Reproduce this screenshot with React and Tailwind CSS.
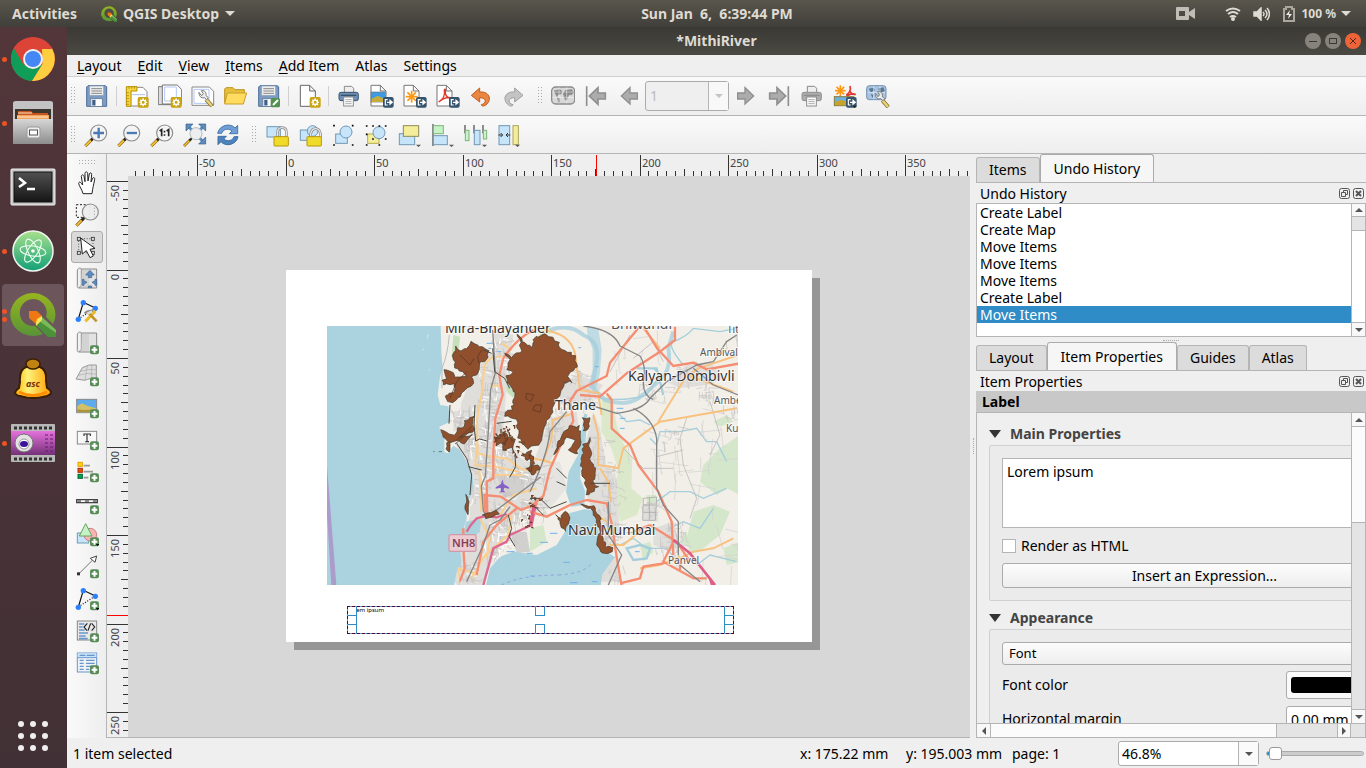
import React, { useEffect, useRef, useState } from "react";

/* ---------- shared icon parts, all drawn on a 72 unit grid ---------- */

function Ico({ children, className = "h-6 w-6" }) {
  return (
    <svg viewBox="0 0 72 72" className={className + " shrink-0"} fill="none" aria-hidden="true">
      {children}
    </svg>
  );
}

const PlusBadge = () => (
  <g>
    <rect x="45" y="43" width="27" height="27" rx="6" fill="#5a8c5a" />
    <path d="M58.500 48v17M50 56.500h17" stroke="#fff" strokeWidth="6" />
  </g>
);
const GearBadge = () => (
  <g>
    <rect x="38" y="39" width="33" height="32" rx="5" fill="#c8a416" />
    <path d="M54.500 43v24M43 55h23M46 47l17 16M63 47L46 63" stroke="#fff" strokeWidth="4" />
    <circle cx="54.500" cy="55" r="6.500" fill="#c8a416" stroke="#fff" strokeWidth="4" />
  </g>
);
const ExportBadge = () => (
  <g>
    <rect x="39" y="39" width="32" height="32" rx="6" fill="#35536d" />
    <path d="M53 47h-7v16h7M51 55h14M60 49v12l7-6z" stroke="#fff" strokeWidth="3.500" />
  </g>
);
const Floppy = () => (
  <g>
    <path d="M9 5h52l4 4v58H5V9z" fill="#7c9cc4" stroke="#4f6f96" strokeWidth="3" />
    <rect x="14" y="6" width="42" height="28" fill="#eee" stroke="#8fa3b8" strokeWidth="2" />
    <path d="M19 14h32M19 21h32M19 28h32" stroke="#888" strokeWidth="3" />
    <rect x="16" y="44" width="36" height="23" fill="#d7dce2" stroke="#5d7896" strokeWidth="2" />
    <rect x="22" y="48" width="9" height="16" fill="#3e5f8a" />
    <rect x="33" y="46" width="17" height="20" fill="#fff" />
  </g>
);
const Sheet = () => <path d="M3 4h28l17 17v45H3zM31 4v17h17" fill="#fff" stroke="#777" strokeWidth="3" />;
const Lens = () => (
  <g>
    <path d="M4 69l22-22" stroke="#6b5312" strokeWidth="9" />
    <path d="M4 69l18-18" stroke="#f3bd31" strokeWidth="6" />
    <path d="M21 52l7-7" stroke="#222" strokeWidth="7" />
    <circle cx="44" cy="30" r="24" fill="#f4f4f4" stroke="#8b8b8b" strokeWidth="3.500" />
  </g>
);
const Wrench = () => (
  <g>
    <path d="M45 46l18 20" stroke="#8a7430" strokeWidth="12" />
    <path d="M45 46l17 19" stroke="#ecd47e" strokeWidth="7" />
    <path d="M24 25c-1 10 6 19 16 16l7 6 5-6-7-6c2-11-6-17-14-15l6 9-5 6z" fill="#eee" stroke="#777" strokeWidth="3" />
  </g>
);
const Drop = () => <path d="M54 65h15l-7.500 7z" fill="#555" />;
const Dots = () => <path d="M6 8h0M62 8h0M6 66h0M62 66h0" stroke="#000" strokeWidth="5" strokeLinecap="square" />;
const Printer = ({ body = "#6f8fb5", line = "#35536d" }) => (
  <g>
    <path d="M22 26V7h22l6 6v13" fill="#eee" stroke="#8a8a8a" strokeWidth="3" />
    <rect x="6" y="25" width="58" height="25" rx="6" fill={body} stroke={line} strokeWidth="3" />
    <path d="M11 34h47" stroke={line} strokeWidth="4" />
    <rect x="20" y="39" width="29" height="27" fill="#fff" stroke="#8a8a8a" strokeWidth="3" />
    <path d="M25 47h19M25 53h19M25 59h19" stroke="#999" strokeWidth="2.500" />
  </g>
);
const Star = ({ x, y, r }) => (
  <g transform={`translate(${x} ${y})`} stroke="#ff9710" strokeWidth="5">
    {[0, 45, 90, 135].map((a) => (
      <path key={a} d={`M0 ${-r}V${r}`} transform={`rotate(${a})`} />
    ))}
  </g>
);
const Padlock = ({ open }) => (
  <g>
    <path d={open ? "M35 45V33q3-17 17-16 14 2 13 28" : "M34 45V32q0-18 14-18t14 18v13"} stroke="#8a8a8a" strokeWidth="8" />
    <path d={open ? "M35 45V33q3-17 17-16 14 2 13 28" : "M34 45V32q0-18 14-18t14 18v13"} stroke="#e5e5e5" strokeWidth="4" />
    <rect x="24" y="41" width="43" height="28" rx="2" fill="#f0dc28" stroke="#b7950a" strokeWidth="3" />
  </g>
);
const Globe = ({ c, f }) => (
  <g>
    <rect x="2" y="9" width="69" height="51" rx="12" fill={f} stroke={c} strokeWidth="4" />
    <path d="M8 20l18-4 9 6-5 9-8 1-4 8-5-10zM18 40l8 2 1 12-5 2zM36 27l7-9 19-2 7 9-8 9-6-2-4 8-5 12-7-10z" fill={c} />
    <path d="M4 24h65M4 40h65M24 10v48M47 10v48" stroke="#fff" strokeWidth="2" opacity=".7" />
  </g>
);
const pic = (
  <g>
    <rect x="5" y="13" width="60" height="40" fill="#5cabed" stroke="#888" strokeWidth="3" />
    <path d="M7 33l14-8 18 8 24 7v12H7z" fill="#d2c069" />
    <path d="M7 43l18 2 38-1v7H7z" fill="#b09335" />
  </g>
);
const polyNodes = (
  <g>
    <path d="M10 60L25 10l36 17" stroke="#111" strokeWidth="3.500" />
    <path d="M10 60l51-33" stroke="#111" strokeWidth="3.500" strokeDasharray="3 5" />
    <circle cx="25" cy="11" r="8" fill="#2a80ff" />
    <circle cx="61" cy="28" r="8" fill="#2a80ff" />
    <circle cx="10" cy="61" r="8" fill="#2a80ff" />
  </g>
);
const mapRoll = (
  <g>
    <path d="M19 6h46v57H12" fill="#e2e2e2" stroke="#8a8a8a" strokeWidth="3" />
    <path d="M19 6v49l-8 8c-4-1-5-4-4-8V9c4-7 9-7 12-3z" fill="#f1f1f1" stroke="#8a8a8a" strokeWidth="3" />
    <path d="M20 8h22v53H17z" fill="#c9c9c9" opacity=".6" />
  </g>
);

const I = {
  save: <Floppy />,
  newLayout: (
    <g>
      <path d="M17 10h37l12 13v43H17z" fill="#fff" stroke="#888" strokeWidth="3" />
      <path d="M22 32h38" stroke="#aebfee" strokeWidth="3" />
      <path d="M4 8h32v13H18v46H4z" fill="#f3d442" stroke="#b89000" strokeWidth="3" />
      <path d="M12 8v6M20 8v6M28 8v6M4 26h8M4 35h8M4 44h8M4 53h8M4 61h8" stroke="#a17f00" strokeWidth="2" />
      <GearBadge />
    </g>
  ),
  duplicate: (
    <g>
      <path d="M1 8h53v54H1z" fill="#ddd" stroke="#777" strokeWidth="3" />
      <path d="M13 3h45l13 14v43H13z" fill="#fff" stroke="#777" strokeWidth="3" />
      <path d="M20 9h35v42H20z" stroke="#b4c6f3" strokeWidth="3" />
      <GearBadge />
    </g>
  ),
  manager: (
    <g>
      <path d="M3 9h52l13 13v42H3z" fill="#fff" stroke="#888" strokeWidth="3" />
      <path d="M9 16h45v42H9z" stroke="#b4c6f3" strokeWidth="3" />
      <Wrench />
    </g>
  ),
  folder: (
    <g>
      <path d="M2 57V15l4-4h21l6 6h28v12" fill="#e6bf3b" stroke="#bd9420" strokeWidth="3" />
      <path d="M10 27h58l-10 33H2z" fill="#ffdc60" stroke="#c79f2c" strokeWidth="3" />
    </g>
  ),
  saveTemplate: (
    <g>
      <Floppy />
      <rect x="41" y="42" width="28" height="28" rx="5" fill="#539153" />
      <path d="M48 63l15-15" stroke="#fff" strokeWidth="6" />
    </g>
  ),
  newPage: (
    <g>
      <path d="M10 4h28l17 17v46H10zM38 4v17h17" fill="#fff" stroke="#666" strokeWidth="3" />
      <GearBadge />
    </g>
  ),
  printer: <Printer />,
  exportImage: (
    <g>
      <Sheet />
      <rect x="3" y="24" width="43" height="30" fill="#3c9be2" stroke="#777" strokeWidth="2" />
      <path d="M5 44l18-9 22 11v8H5z" fill="#c7ac3d" />
      <ExportBadge />
    </g>
  ),
  exportSvg: (
    <g>
      <Sheet />
      <Star x={26} y={38} r={18} />
      <ExportBadge />
    </g>
  ),
  exportPdf: (
    <g>
      <Sheet />
      <path d="M8 54c14-8 19-22 17-34-1-6 5-6 3 2-2 14 11 24 22 20-11-3-26-2-42 12z" stroke="#e0382c" strokeWidth="4" />
      <ExportBadge />
    </g>
  ),
  undo: <path d="M7 34l25-22v12c33-3 38 29 15 41-4 2-10 1-10-3 17-4 16-21-5-21v13z" fill="#e98642" stroke="#c35d1b" strokeWidth="3" />,
  redo: <path d="M63 34L38 12v12C5 21 0 53 23 65c4 2 10 1 10-3-17-4-16-21 5-21v13z" fill="#c4c4c4" stroke="#a0a0a0" strokeWidth="3" />,
  atlas: <Globe c="#8b8b8b" f="#d8d8d8" />,
  first: <path d="M8 7v59M64 27v18H42v16L16 36l26-25v16z" fill="#acacac" stroke="#8f8f8f" strokeWidth="5" />,
  prev: <path d="M61 27v18H39v15L13 36l26-25v16z" fill="#acacac" stroke="#8f8f8f" strokeWidth="4" />,
  next: <path d="M11 27v18h22v15l26-24-26-25v16z" fill="#acacac" stroke="#8f8f8f" strokeWidth="4" />,
  last: <path d="M64 7v59M8 27v18h22v16l26-25-26-25v16z" fill="#acacac" stroke="#8f8f8f" strokeWidth="5" />,
  printerOff: <Printer body="#acacac" line="#8f8f8f" />,
  exportAtlas: (
    <g>
      <Star x={22} y={20} r={16} />
      <path d="M40 33c12-8 13-20 11-27M50 18c2 10 10 14 18 13-9-3-18 0-28 6" stroke="#e0382c" strokeWidth="5" />
      <rect x="4" y="38" width="58" height="27" fill="#6db1df" stroke="#8b7b35" strokeWidth="3" />
      <path d="M6 54l18-7 37 12v5H6z" fill="#c7a32c" />
      <ExportBadge />
      <path d="M58 65h14l-7 7z" fill="#222" />
    </g>
  ),
  atlasSettings: (
    <g>
      <rect x="2" y="5" width="58" height="42" rx="8" fill="#a8c3df" stroke="#7590b3" strokeWidth="3" />
      <path d="M8 14l14-3 5 8-12 6zM36 14l16-4 4 10-10 7zM14 30l10 3-4 9z" fill="#5b7796" />
      <path d="M5 26h52M23 6v40M42 6v40" stroke="#e6eef7" strokeWidth="2" />
      <g transform="translate(4 3)"><Wrench /></g>
    </g>
  ),
  zoomIn: (
    <g>
      <Lens />
      <path d="M44 14v32M28 30h32" stroke="#4a7ab3" strokeWidth="7" />
    </g>
  ),
  zoomOut: (
    <g>
      <Lens />
      <path d="M29 30h31" stroke="#4a7ab3" strokeWidth="7" />
    </g>
  ),
  zoomOne: (
    <g>
      <Lens />
      <path d="M29 24l6-4v20M50 24l6-4v20" stroke="#222" strokeWidth="5" />
      <path d="M41 26h5M41 36h5" stroke="#222" strokeWidth="5" />
    </g>
  ),
  zoomFull: (
    <g>
      <path d="M14 8l48 50M63 8L40 32" stroke="#5d8dbd" strokeWidth="9" />
      <path d="M9 3h21L9 24zM68 3v21L47 3zM68 63H47l21-21z" fill="#5d8dbd" stroke="#355d8b" strokeWidth="2" />
      <path d="M3 69l22-22" stroke="#70551a" strokeWidth="8" />
      <path d="M3 69l18-18" stroke="#f3bd31" strokeWidth="5" />
      <path d="M19 53l7-7" stroke="#222" strokeWidth="6" />
      <circle cx="39" cy="32" r="18" fill="#eceef0" stroke="#b5b9bd" strokeWidth="3" />
    </g>
  ),
  refresh: (
    <g>
      <path d="M5 31C9 7 42-2 57 15l8-8v25H40l8-8C36 13 20 20 17 31z" fill="#6f9fd5" stroke="#4778af" strokeWidth="3" />
      <path d="M66 41c-4 24-37 32-51 15l-9 9V40h25l-8 8c12 10 28 4 31-7z" fill="#4e82bd" stroke="#3f6fa7" strokeWidth="3" />
    </g>
  ),
  lock: (
    <g>
      <rect x="3" y="11" width="40" height="31" fill="#c6e5fa" stroke="#7198b4" strokeWidth="3" />
      <Padlock />
    </g>
  ),
  unlock: (
    <g>
      <rect x="4" y="21" width="33" height="31" fill="#c6e5fa" stroke="#7198b4" strokeWidth="3" />
      <circle cx="41" cy="24" r="16" fill="#c6e5fa" stroke="#7198b4" strokeWidth="3" />
      <Padlock open />
    </g>
  ),
  group: (
    <g>
      <rect x="11" y="33" width="35" height="28" fill="#c6e5fa" stroke="#7198b4" strokeWidth="3" />
      <circle cx="42" cy="27" r="18" fill="#c6e5fa" stroke="#7198b4" strokeWidth="3" />
      <Dots />
    </g>
  ),
  ungroup: (
    <g>
      <rect x="8" y="33" width="34" height="28" fill="#f4ee9b" stroke="#b5ad4f" strokeWidth="3" />
      <circle cx="42" cy="29" r="18" fill="#c6e5fa" stroke="#7198b4" strokeWidth="3" />
      <path d="M5 9h0M24 9h0M43 9h0M62 9h0M5 34h0M5 66h0M24 48h0M43 66h0M62 48h0" stroke="#000" strokeWidth="5" strokeLinecap="square" />
    </g>
  ),
  raise: (
    <g>
      <rect x="4" y="32" width="46" height="33" fill="#c6e5fa" stroke="#7198b4" strokeWidth="3" />
      <rect x="16" y="8" width="46" height="32" fill="#f4ee9b" stroke="#8f8a5a" strokeWidth="3" />
      <Drop />
    </g>
  ),
  align: (
    <g>
      <path d="M6 3v66" stroke="#222" strokeWidth="3" />
      <rect x="7" y="8" width="30" height="24" fill="#c6f3c6" stroke="#7db47d" strokeWidth="3" />
      <rect x="7" y="38" width="42" height="27" fill="#c6e5fa" stroke="#7198b4" strokeWidth="3" />
      <Drop />
    </g>
  ),
  distribute: (
    <g>
      <path d="M3 6v25M30 6v25M57 6v25" stroke="#222" strokeWidth="3" />
      <rect x="4" y="22" width="11" height="31" fill="#c6f3c6" stroke="#7db47d" strokeWidth="3" />
      <rect x="31" y="22" width="17" height="43" fill="#c6e5fa" stroke="#7198b4" strokeWidth="3" />
      <rect x="58" y="22" width="10" height="26" fill="#c6f3c6" stroke="#7db47d" strokeWidth="3" />
      <Drop />
    </g>
  ),
  resize: (
    <g>
      <rect x="6" y="8" width="32" height="57" fill="#c6e5fa" stroke="#7198b4" strokeWidth="3" />
      <rect x="48" y="8" width="16" height="57" fill="#f4ee9b" stroke="#aaa45a" strokeWidth="3" />
      <path d="M4 36h12M11 30l6 6-6 6M40 36H28M33 30l-6 6 6 6" stroke="#333" strokeWidth="3" />
      <Drop />
    </g>
  ),
  hand: (
    <path
      d="M24 68c-2-12-12-22-13-31 1-6 6-4 10 3l2 2-4-26c1-6 6-6 8 0l3 16V7c1-6 7-6 8 0l1 23 4-21c2-5 7-4 7 1l-2 23 5-11c3-4 7-2 6 3-3 17-6 26-8 43z"
      fill="#fff"
      stroke="#222"
      strokeWidth="3"
    />
  ),
  zoomSel: (
    <g>
      <rect x="4" y="5" width="40" height="38" stroke="#222" strokeWidth="3" strokeDasharray="6 5" />
      <path d="M4 68l22-22" stroke="#6b5312" strokeWidth="9" />
      <path d="M4 68l18-18" stroke="#f3bd31" strokeWidth="6" />
      <path d="M20 52l8-8" stroke="#222" strokeWidth="7" />
      <circle cx="46" cy="27" r="24" fill="#ececec" fillOpacity=".94" stroke="#8b8b8b" strokeWidth="3.500" />
      <path d="M58 14v28" stroke="#aaa" strokeWidth="3" strokeDasharray="4 5" />
    </g>
  ),
  select: (
    <g>
      <rect x="11" y="11" width="43" height="42" stroke="#444" strokeWidth="2.500" strokeDasharray="3 5" />
      {[7, 49].map((x) => [7, 49].map((y) => <rect key={`${x}-${y}`} x={x} y={y} width="9" height="9" fill="#ddd" stroke="#333" strokeWidth="2.500" />))}
      <path d="M17 9l5 48 12-10 11 21 10-5-10-20 15-3z" fill="#fff" stroke="#222" strokeWidth="3" />
    </g>
  ),
  moveContent: (
    <g>
      {mapRoll}
      <path
        d="M45 10L32 24h8v8h10v-8h8zM22 37h5v4l9 5-9 5v4h-5zM65 37h-5v4l-9 5 9 5v4h5zM40 62v-5h10v5z"
        fill="#5b8cc0"
        stroke="#3b6496"
        strokeWidth="2"
      />
    </g>
  ),
  editNodes: (
    <g>
      {polyNodes}
      <path d="M29 43q16-14 31 0" stroke="#888" strokeWidth="7" />
      <path d="M31 67l30-31" stroke="#e9bd24" strokeWidth="9" />
      <path d="M41 42l24 25" stroke="#c2932d" strokeWidth="8" />
      <path d="M37 44l14-7" stroke="#ddd" strokeWidth="7" />
    </g>
  ),
  addMap: (
    <g>
      {mapRoll}
      <PlusBadge />
    </g>
  ),
  add3d: (
    <g>
      <path d="M22 14q20-12 42-8v43q-22-5-34 3L3 48z" fill="#dedede" stroke="#999" strokeWidth="3" />
      <path d="M16 25q24-8 48-5M10 37q24-9 54-4M37 8l-7 42M50 6l0 42" stroke="#aaa" strokeWidth="2" />
      <PlusBadge />
    </g>
  ),
  addPicture: (
    <g>
      {pic}
      <PlusBadge />
    </g>
  ),
  addLabel: (
    <g>
      <rect x="7" y="13" width="58" height="38" fill="#f7f7f7" stroke="#888" strokeWidth="3" />
      <path d="M27 27v-6h19v6M36 21v23M31 44h11" stroke="#333" strokeWidth="3.500" />
      <PlusBadge />
    </g>
  ),
  addLegend: (
    <g>
      <rect x="9" y="10" width="13" height="12" fill="#ffd414" stroke="#e99e00" strokeWidth="3" />
      <rect x="9" y="28" width="13" height="12" fill="#f04a10" stroke="#a92e00" strokeWidth="3" />
      <rect x="9" y="46" width="13" height="12" fill="#00a651" stroke="#006633" strokeWidth="3" />
      <path d="M26 20h19M26 38h28M26 56h14" stroke="#999" strokeWidth="5" />
      <PlusBadge />
    </g>
  ),
  addScale: (
    <g>
      <rect x="5" y="26" width="62" height="9" fill="#fff" stroke="#333" strokeWidth="3.500" />
      <path d="M7 30h11M30 30h12M54 30h11" stroke="#888" strokeWidth="6" />
      <PlusBadge />
    </g>
  ),
  addShape: (
    <g>
      <rect x="7" y="30" width="34" height="30" fill="#c6e5fa" stroke="#7198b4" strokeWidth="3" />
      <circle cx="46" cy="35" r="19" fill="#fab4b4" stroke="#cb8080" strokeWidth="3" />
      <path d="M32 2l19 37H13z" fill="#c6f3c6" stroke="#64a264" strokeWidth="3" />
      <PlusBadge />
      <path d="M62 63h12l-6 7z" fill="#111" />
    </g>
  ),
  addArrow: (
    <g>
      <path d="M11 57l43-43" stroke="#777" strokeWidth="3" />
      <path d="M65 3l-5 19-7-6-7-6z" fill="#fff" stroke="#444" strokeWidth="3" />
      <rect x="6" y="52" width="9" height="9" fill="#333" />
      <PlusBadge />
    </g>
  ),
  addNode: (
    <g>
      {polyNodes}
      <PlusBadge />
      <path d="M62 63h12l-6 7z" fill="#111" />
    </g>
  ),
  addHtml: (
    <g>
      <rect x="7" y="6" width="58" height="57" fill="#e9e9e9" stroke="#888" strokeWidth="3" />
      <path d="M12 15h16M12 24h11M12 33h17M12 42h27M12 51h20M12 59h26" stroke="#6a95c8" strokeWidth="5" />
      <path d="M37 13l-10 11 9 11M47 13l-8 22M50 13l9 11-9 11" stroke="#222" strokeWidth="3.500" />
      <PlusBadge />
    </g>
  ),
  addTable: (
    <g>
      <rect x="7" y="6" width="58" height="57" fill="#eef3f8" stroke="#6a95c8" strokeWidth="3" />
      <path d="M8 13h56" stroke="#c6e5fa" strokeWidth="12" />
      <path d="M7 20h58" stroke="#6a95c8" strokeWidth="3" />
      <path d="M14 13h17M35 13h24M14 28h12M33 28h26M14 37h12M33 37h26M14 46h12M33 46h20M14 55h12M33 55h10" stroke="#6a95c8" strokeWidth="4" />
      <PlusBadge />
    </g>
  ),
};

/* ---------- small building blocks ---------- */

const Tool = ({ n, label, disabled }) => (
  <button type="button" aria-label={label} disabled={disabled} className="flex w-[33px] shrink-0 items-center justify-center">
    <Ico>{I[n]}</Ico>
  </button>
);
const Sep = () => (
  <span className="flex w-[7px] shrink-0 items-center justify-center">
    <span className="h-5 w-px bg-[#cfcfcf]" />
  </span>
);
const Grip = ({ className = "w-[13px]" }) => (
  <span className={"flex shrink-0 items-center justify-center " + className}>
    <svg width="5" height="18" aria-hidden="true">
      {[0, 3, 6, 9, 12, 15].map((y) => [0, 3].map((x) => <rect key={x + "-" + y} x={x} y={y} width="1" height="1" fill="#aaa" />))}
    </svg>
  </span>
);
const Tri = ({ d = "down", c = "#555" }) => (
  <svg width="8" height="8" viewBox="0 0 8 8" aria-hidden="true">
    <path d={{ down: "M0 2h8L4 6z", up: "M0 6h8L4 2z", left: "M6 0v8L2 4z", right: "M2 0v8l4-4z" }[d]} fill={c} />
  </svg>
);
const ArrowBtn = ({ d, className }) => (
  <button type="button" aria-label={"Scroll " + d} className={"flex shrink-0 items-center justify-center bg-[#f8f8f8] " + className}>
    <Tri d={d} />
  </button>
);
const Tab = ({ children, active }) => (
  <button
    type="button"
    role="tab"
    aria-selected={!!active}
    className={
      "shrink-0 rounded-t-[3px] border border-b-0 text-sm " +
      (active ? "h-7 border-[#ababab] bg-[#f6f6f6] px-[13px]" : "h-[25px] border-[#b5b5b5] bg-[#dcdcdc] px-3")
    }
  >
    {children}
  </button>
);
const DockHeader = ({ children }) => (
  <div className="flex h-5 shrink-0 items-center pt-px pl-1 text-sm">
    <h2 className="flex-1">{children}</h2>
    <span className="flex gap-[3px] pr-[2px]">
      <button type="button" aria-label="Float panel">
        <svg width="11" height="11" fill="none" stroke="#555" aria-hidden="true">
          <rect x=".5" y=".5" width="10" height="10" rx="2" />
          <path d="M4.500 4V2.500h4v4H7M2.500 4.500h4v4h-4z" />
        </svg>
      </button>
      <button type="button" aria-label="Close panel">
        <svg width="11" height="11" fill="none" stroke="#555" aria-hidden="true">
          <rect x=".5" y=".5" width="10" height="10" rx="2" />
          <path d="M3 3l5 5M8 3L3 8" strokeWidth="2" />
        </svg>
      </button>
    </span>
  </div>
);

/* ---------- rulers ---------- */

const MM = 1.77;
const MAJOR = 50;

/* Tracks the size of an element so that a ruler only draws what it has room for. */
function useSize(initial) {
  const ref = useRef(null);
  const [size, setSize] = useState(initial);
  useEffect(() => {
    const ob = new ResizeObserver(([e]) => setSize([e.contentRect.width, e.contentRect.height]));
    ob.observe(ref.current);
    return () => ob.disconnect();
  }, []);
  return [ref, size];
}

function rulerTicks(zero, from, to) {
  const first = Math.ceil((from - zero) / MM / 5) * 5;
  const list = [];
  for (let t = first; zero + t * MM < to; t += 5) list.push([t, Math.round(zero + t * MM)]);
  return list;
}

function HRuler() {
  const [ref, [w]] = useSize([862, 22]);
  const list = rulerTicks(178.5, 22, w);
  return (
    <div ref={ref} className="h-[22px] overflow-hidden bg-[#efefef]">
      <svg className="block h-[22px] w-full" aria-label="Horizontal ruler">
        {list.map(([t, x]) => {
          const y = t % MAJOR === 0 ? 1 : t % 25 === 0 ? 15 : 17;
          return <rect key={t} x={x} y={y} width="1" height={22 - y} fill="#333" />;
        })}
        {list.filter(([t, x]) => t % MAJOR === 0 && x < w - 30).map(([t, x]) => (
          <text key={t} x={x + 2} y="13" className="fill-[#444] text-[11px]">{t}</text>
        ))}
        <rect x="489" y="1" width="1" height="21" fill="#f00" />
      </svg>
    </div>
  );
}

function VRuler() {
  const [ref, [, h]] = useSize([21, 561]);
  const list = rulerTicks(93.500, 0, h);
  return (
    <div ref={ref} className="w-[21px] shrink-0 overflow-hidden bg-[#efefef]">
      <svg className="block h-full w-[21px]" aria-label="Vertical ruler">
        {list.map(([t, y]) => {
          const x = t % MAJOR === 0 ? 0 : t % 25 === 0 ? 14 : 16;
          return <rect key={t} x={x} y={y} width={21 - x} height="1" fill="#333" />;
        })}
        {list.filter(([t, y]) => t % MAJOR === 0 && y < h - 24).map(([t, y]) => (
          <text key={t} textAnchor="end" transform={`translate(12 ${y + 4}) rotate(-90)`} className="fill-[#444] text-[11px]">{t}</text>
        ))}
        <rect x="0" y="439" width="21" height="1" fill="#f00" />
      </svg>
    </div>
  );
}

/* ---------- map of the Mumbai region ---------- */

function rng(seed) {
  let s = seed;
  return () => ((s = (s * 16807) % 2147483647) / 2147483647);
}
function streets(seed, pts, n, spread, len) {
  const r = rng(seed);
  let d = "";
  for (let i = 0; i < n; i++) {
    const p = pts[Math.floor(r() * pts.length)];
    const x = p[0] + (r() - 0.5) * spread;
    const y = p[1] + (r() - 0.5) * spread;
    const a = (r() > 0.5 ? 1.5 : 0.1) + (r() - 0.5) * 0.5;
    const l = len * (0.4 + r());
    d += `M${x.toFixed(0)} ${y.toFixed(0)}l${(Math.cos(a) * l).toFixed(0)} ${(Math.sin(a) * l).toFixed(0)}l${((r() - 0.5) * 18).toFixed(0)} ${((r() - 0.5) * 18).toFixed(0)}`;
  }
  return d;
}
function blob(seed, pts, jag) {
  const r = rng(seed);
  let d = "";
  pts.forEach((p, i) => {
    const q = pts[(i + 1) % pts.length];
    const n = Math.max(2, Math.round(Math.hypot(q[0] - p[0], q[1] - p[1]) / 9));
    for (let k = 0; k < n; k++) {
      const x = p[0] + ((q[0] - p[0]) * k) / n + (r() - 0.5) * jag;
      const y = p[1] + ((q[1] - p[1]) * k) / n + (r() - 0.5) * jag;
      d += `${d ? "L" : "M"}${x.toFixed(0)} ${y.toFixed(0)}`;
    }
  });
  return d + "z";
}
const cityA = [[500, 180], [510, 230], [500, 280], [520, 330], [480, 360], [440, 290], [410, 300], [500, 420], [550, 410], [480, 470], [540, 460], [600, 480], [470, 530], [530, 560], [580, 600], [620, 580], [520, 640], [500, 700], [440, 770], [540, 680], [540, 90], [550, 150], [450, 380]];
const cityB = [[50, 350], [70, 320], [100, 270], [140, 200], [110, 180], [170, 250], [200, 380], [210, 450], [240, 520], [230, 570], [240, 620], [250, 480], [30, 480], [20, 580], [460, 170], [520, 220], [380, 220], [550, 230], [400, 680], [440, 640], [450, 700], [360, 580], [260, 770], [240, 660], [350, 200], [600, 290], [420, 360], [600, 50]];
const countryB = [[300, 120], [400, 90], [330, 210], [480, 380], [560, 460], [400, 440], [550, 330], [560, 600], [600, 680], [480, 520], [330, 360], [560, 740]];

function MapView() {
  return (
    <svg viewBox="0 0 411 259" className="absolute left-[41px] top-[56px] h-[259px] w-[411px] overflow-hidden" role="img" aria-label="Map of Mumbai and surroundings">
      <rect width="411" height="259" fill="#f2efe9" />
      <g transform="translate(-7 -11) scale(.33333)" fill="none">
        {/* fields and forests, east side */}
        <g transform="translate(630 0)" fill="#d5e7cb">
          <path d="M215 250l30-10 15 90 22 60 25 40-3 90 35 30-18 50-50 20-15-70 8-90-20-60-30-50z" fill="#dce8ca" />
          <path d="M520 450l50-50 60-40v180l-40-20-30 20-50-40z" />
          <path d="M490 590l60-20 50 20-30 70-50 40-40 20-10-50z" />
          <path d="M330 690l30-10 10 30-30 30zM0 640l40-10 10 50-50 30zM550 320l40-20 20 20-40 15zM580 700l50-20v60l-40 10zM350 540h28v60h-28zM30 40l30-5 5 20-35 10z" />
          <path d="M60 760l30 20-20 30H40zM470 650l-20 30 30 20z" />
        </g>
        <path d="M400 60l20 5-5 50-20 10zM555 180l30 50-5 20-20-20z" fill="#c6e0bb" />
        {/* built-up areas */}
        <g fill="#e0dedb">
          <path d="M480 120l60-10 20 100-10 130 40 80 30 20 30-10 10 60-30 80-70 80-40 80-30 80-70 20-20-40 30-110 20-80-5-120-40-100 20-120zM400 290l50-10-10 50-40 20zM520 50l60 10-10 60-40 10z" />
          <path d="M530 480l90 0-10 50-60 20zM570 650l50 0 10 60-40 5z" fill="#d2d0ce" />
          <g transform="translate(630 0)">
            <path d="M60 310l80-20 5 40-50 40-40 80-40-20zM190 290l20 50 20 120 30 30 8 150-50 60-20-80-30-90 20-60-20-90zM90 200l60-20 70 30-40 50-90 10zM370 640l60-20 20 70-30 20-50-20zM410 200l60-50 70-10 40 50-50 20-80 10zM340 570l40-10 5 60-45-5zM220 750l40-30 10 80h-60z" />
            <path d="M0 440l90 0 20 80-50 60-60 20z" fill="#e6e4e0" />
          </g>
        </g>
        {/* sea */}
        <g fill="#aad3df">
          <path d="M21 33h341l2 77 4 50-8 25-7 55 8 30 24 4 6 46-33 15 3 14 12 18 0 45 12 3 15-23 20 13 20 37 14 30 6 30-4 35-16 25v50l-10 30-11 50 6 50-15 30-8 40H21z" />
          <path d="M438 620l46-10-4 40-25 20-27-10zM498 810l12-50 30-35 40-15 70 10 60-30 28-45 9-50 45-12 30 3 10 50 10 50 20 25 22 15-15 22-22 30-6 42z" />
          <g transform="translate(630 0)">
            <path d="M162 298l10 0-6 90-12 50-4 50 15 40-2 42-40 5-15-45 8-60 28-50z" />
            <path d="M170 33l35 10 10 60-5 70-12 50-22-10 12-50 0-60-15-40z" opacity=".7" />
          </g>
        </g>
        <path d="M21 455l7 85 21 270H34L21 600z" fill="#ac9ccc" />
        <path d="M545 810q60-30 170-30M715 780q80-5 100-35" stroke="#8fa1d8" strokeWidth="3" strokeDasharray="9 10" />
        <path d="M308 105l5-4M322 70l3-12M326 167l4-4" stroke="#dfe6e4" strokeWidth="3" />
        <path d="M340 410h4M356 410h10" stroke="#5d7f6a" strokeWidth="3" />
        {/* rivers */}
        <g transform="translate(630 0)" stroke="#a4cedb" strokeWidth="7">
          <path d="M60 45q60-20 100 15 50 20 40 80t-15 75l40 40q60 20 100-5 40-30 70-60t20-90l15-50" strokeWidth="12" opacity=".75" />
          <path d="M460 150q-50-60-30-70 40-15 60-40l80 10 50-10M210 250q80 10 140-10l40-60-20-20M260 290l30 30 40-5 30 15M360 370l20 20 10-40 60 0 50-10 30 40 30 0 30 60M380 560l40-30 60 0 40 20 70-30M420 640l40-20 50 20 40-60M500 750l40-30 80 20M270 690l40-20 40 30 60 0 40 50" strokeWidth="4" />
          <path d="M290 700l40-10 30 10-10 30-40 5zM320 160l60 0 20 80" strokeWidth="7" />
          <path d="M260 280h20M270 310h16M270 340h14M145 98h8M195 155h12M330 653h18M315 710h14M60 655h22M30 682h24M100 742h20M0 783h14M120 803h22M185 800h18M290 653h20" stroke="#6fb1ea" strokeWidth="3" />
        </g>
        <path d="M500 85h20M530 110h14M505 100h12M560 710h24M620 715h18" stroke="#6fb1ea" strokeWidth="3" />
        {/* minor streets */}
        <path d={streets(7, cityA, 330, 54, 26)} stroke="#c2c0be" strokeWidth="2" />
        <path d={streets(11, cityA, 90, 50, 22)} stroke="#fff" strokeWidth="3" />
        <g transform="translate(630 0)">
          <path d={streets(19, cityB, 330, 54, 24)} stroke="#c6c4c2" strokeWidth="2" />
          <path d={streets(23, countryB, 50, 100, 60)} stroke="#d2d0cd" strokeWidth="2" />
          <path d="M300 60l-60 110M310 130l60-50 30 60M470 310l-20 60 10 80 40 100-20 60M380 425l80-20M540 260l30 100-30 60M280 400l60 60 90 0" stroke="#bdbbb9" strokeWidth="2.500" />
          <path d="M340 550l40-4-4 70h-38zM340 570h36M340 592h36M358 548v68" stroke="#a9a9a9" strokeWidth="2.500" />
        </g>
        <path d="M388 60q-5 60-22 100v60" stroke="#bbb" strokeWidth="3" />
        {/* main roads and railway lines */}
        <g strokeLinejoin="round">
          <path d="M545 125q-40-5-52 30l-8 80-14 80 2 100 30 8 60 8 40 30 55 10M470 390l-4 60 60 5 70 15M478 460l6 130M540 600l40-60 70-20M520 480h90M455 790l40-70 70-60 10-60M480 610l30 60-10 60M420 800l-5-40 60 20M545 85l30 20M515 212h30" stroke="#f9cf8f" strokeWidth="6" />
          <path d="M640 45q-50 25-90 85l-12 50 10 60-22 70-6 100 0 80-20 10 2 100M497 600l-4-60 50 5 60 40 50-20M430 640v60l4 60-15 40M470 780l20-100 40-50 60-50" stroke="#f58d72" strokeWidth="7" />
          <path d="M440 650q10-20 30-40l30-8 30 5 30-10M490 810l30-110 40-20 10-20 65-30 12-60" stroke="#de6790" strokeWidth="7" />
          <path d="M518 45l8 128-14 50-8 140-8 120-12 30 6 75 12 18 80-60 80-60M440 800l50-110 20-60 30-15 30-40" stroke="#858585" strokeWidth="4" />
          <g transform="translate(630 0)">
            <path d="M40 45q80 10 95 70l15 110 60 10M10 430l60 15-30-10 24-60 5-60 60-20M190 300l15 60 0 90 60 10 15-60 110-80 230-40M210 460l25 40 8 60M205 240l10 60M385 320l80-130 40-30 120-40M470 180l140 50M430 740l60-30 60-10 60-30M340 40l50 60M240 690l40 0 60-50M330 760l60-10 60-25M200 600l30 20" stroke="#f7c27f" strokeWidth="6" />
            <path d="M330 33l-90 110-10 40-90 45-20 30 10 60-30 55-40 90-20 80-30 25M150 240l60 5 80-70 100-65 45-35v-40M230 235l15 20 0 85 55 50 25 60 60 80 40 90 5 100M340 33l40 65 50 55 60-10 40 20 100-18M0 590l50 15 70-35 50-15 60 10 15 60 10 70 20 120M360 630l80 50 40 60M310 650l50-20M430 680l-30 60 90 50 40 0M400 745l-60 10-10 35-60 15M450 735l0 30" stroke="#f58d72" strokeWidth="7" />
            <path d="M0 630l12-60M430 675l50 40 75 95M540 790l10 30" stroke="#df5c86" strokeWidth="8" />
            <path d="M160 33q90 10 110 60l60 30q20 30 10 80 0 40 30 50M490 160l60 50 75 30M180 270l80 25q80-10 100-45l50-50 90-50 50-10 40-60 30-20M310 280q60 30 70 90l0 150 20 50 45 50v100M110 290l-50 60q-10 80-60 180M235 560l0 100 40 60-40 90M450 750l60 50" stroke="#858585" strokeWidth="4" />
          </g>
        </g>
        {/* protected areas */}
        <g fill="#90502d" stroke="#3d3a2d" strokeWidth="2">
          <path d={blob(3, [[400, 122], [410, 96], [425, 108], [450, 96], [455, 82], [480, 92], [505, 110], [500, 132], [476, 146], [475, 174], [455, 186], [460, 205], [440, 220], [425, 236], [400, 264], [385, 262], [375, 240], [405, 230], [400, 206], [370, 210], [365, 195], [380, 190], [375, 166], [400, 170], [405, 190], [438, 182], [405, 156]], 7)} />
          <path d={blob(5, [[425, 365], [460, 350], [460, 305], [435, 316], [436, 334], [415, 340], [405, 360], [365, 345], [365, 360], [390, 385], [410, 375], [430, 388], [455, 360]], 8)} />
          <path d={blob(9, [[382, 385], [388, 380], [392, 395], [388, 412], [380, 404]], 5)} />
          <path d={blob(13, [[595, 55], [610, 85], [635, 95], [640, 70], [675, 58], [690, 64], [715, 80], [720, 95], [765, 125], [770, 155], [745, 180], [755, 200], [730, 205], [725, 230], [700, 265], [695, 295], [675, 325], [670, 365], [660, 392], [620, 400], [595, 365], [592, 315], [558, 303], [555, 290], [575, 285], [585, 235], [555, 187], [575, 175], [560, 155], [570, 135], [555, 118], [575, 125], [605, 105]], 9)} />
          <path d={blob(17, [[530, 370], [545, 355], [560, 352], [572, 372], [586, 378], [584, 408], [566, 396], [550, 402], [545, 385], [532, 390]], 14)} />
          <path d={blob(21, [[608, 418], [630, 408], [642, 428], [625, 440]], 10)} />
          <path d={blob(25, [[622, 462], [640, 448], [660, 455], [645, 475], [635, 482]], 8)} />
          <path d={blob(27, [[440, 538], [448, 560], [444, 600], [436, 580]], 6)} />
          <path d={blob(29, [[490, 598], [530, 588], [538, 598], [500, 608]], 6)} />
          <g transform="translate(630 0)">
            <path d={blob(31, [[122, 335], [148, 335], [150, 385], [140, 418], [118, 405], [135, 375], [108, 368], [95, 392], [75, 418], [85, 380], [108, 342]], 8)} />
            <path d={blob(37, [[162, 385], [178, 372], [182, 440], [198, 462], [190, 500], [204, 515], [172, 542], [165, 490], [155, 470], [155, 430]], 9)} />
            <path d={blob(39, [[160, 310], [178, 308], [174, 345], [162, 348]], 6)} />
            <path d={blob(41, [[155, 568], [190, 573], [212, 610], [216, 660], [226, 695], [248, 695], [244, 712], [215, 716], [202, 690], [208, 650], [192, 600], [180, 582]], 7)} />
            <path d={blob(43, [[80, 598], [92, 612], [106, 590], [118, 600], [116, 620], [104, 652], [92, 628]], 7)} />
            <path d={blob(47, [[0, 420], [14, 425], [8, 460], [0, 470]], 7)} />
          </g>
        </g>
        <path d={streets(53, [[560, 350], [570, 390], [540, 370], [600, 400], [640, 560], [620, 620]], 50, 40, 5)} stroke="#6c4028" strokeWidth="4" />
        <g stroke="#52301f" strokeWidth="2">
          <path d="M485 105l-12 20 4 20M440 170l-30 30-20 50M455 335l-45 40M455 345l-50 42M420 120l30 30 12-20M620 235l22 5-10 20-15-10zM645 270h20l-5 22-22-8z" />
        </g>
        <g stroke="#474741" strokeWidth="3">
          <path d="M518 100l6 70 30 20 15 30M465 270l-3 60 5 48 12 -6 22 6M390 270l-3 56M410 385l30 45 15 50-5 60M490 105l25 10M445 455l40 10M530 325l45-6M585 420l2 35-18 32M565 600l10 40-8 24 18 30" />
          <g transform="translate(630 0)">
            <path d="M240 505h-60M80 460l30 30M80 500l26 12M0 550l30 0 30 30 50-20M20 580l20 20" />
          </g>
        </g>
        <path d="M547 493l4 14 16 10v4l-15-3-1 9 6 5h-20l6-5-1-9-15 3v-4l16-10z" fill="#8461c4" />
        <rect x="387" y="659" width="81" height="50" rx="5" fill="#eccbd2" stroke="#d09aaa" strokeWidth="4" />
      </g>
      <g className="fill-[#333] stroke-white/60 stroke-2 text-[14px]" style={{ paintOrder: "stroke" }} fontFamily="Noto Sans, sans-serif">
        <text x="118" y="7">Mira-Bhayander</text>
        <text x="284" y="3" className="fill-[#555]">Bhiwandi</text>
        <text x="301" y="55">Kalyan-Dombivli</text>
        <text x="228" y="84">Thane</text>
        <text x="241" y="209">Navi Mumbai</text>
        <g className="fill-[#555] text-[10px]">
          <text x="373" y="30">Ambivali</text>
          <text x="387" y="78">Ambernath</text>
          <text x="399" y="106">Kulgaon</text>
          <text x="400" y="7">Titwala</text>
          <text x="341" y="238">Panvel</text>
        </g>
        <text x="125" y="221" className="fill-[#804058] stroke-0 text-[11px] font-semibold">NH8</text>
      </g>
    </svg>
  );
}

/* ---------- launcher ---------- */

const ChromeIcon = () => (
  <svg viewBox="0 0 44 44" className="size-11" aria-hidden="true">
    <circle cx="22" cy="22" r="22" fill="#dc4437" />
    <path d="M2.900 11A22 22 0 0 0 21 44l11-17-10 5-10-5z" fill="#109d58" />
    <path d="M41 11.500A22 22 0 0 1 21 44l10.500-17L31 12z" fill="#ffcd40" />
    <path d="M22 12h19a22 22 0 0 0-38-1l9 15z" fill="#dc4437" />
    <circle cx="22" cy="22" r="10" fill="#f1f1f1" />
    <circle cx="22" cy="22" r="8" fill="#4587f4" />
  </svg>
);
const FilesIcon = () => (
  <svg viewBox="0 0 44 44" className="size-11" aria-hidden="true">
    <defs><linearGradient id="fg" x2="0" y2="1"><stop stopColor="#d6d6d6" /><stop offset="1" stopColor="#8d8d8d" /></linearGradient></defs>
    <path d="M2 2q0-2 3-2h34q3 0 3 2v41H2z" fill="#c3c3c3" />
    <path d="M4 8h36v11H4z" fill="#3c3630" />
    <path d="M7 10h13l2 2h15v6H7z" fill="#c9551e" />
    <path d="M6 14h32v4H6z" fill="#f5a45c" />
    <path d="M7 12h14M6 16h31" stroke="#fde5cb" />
    <path d="M2 18h40v25H2z" fill="url(#fg)" />
    <rect x="16" y="26" width="13" height="11" rx="2" fill="#eee" stroke="#999" />
    <rect x="18.500" y="29" width="8" height="5" fill="#fff" stroke="#555" />
  </svg>
);
const TerminalIcon = () => (
  <svg viewBox="0 0 46 38" className="h-[38px] w-[46px]" aria-hidden="true">
    <defs><linearGradient id="tg" x2="0" y2="1"><stop stopColor="#515151" /><stop offset="1" stopColor="#151515" /></linearGradient></defs>
    <rect x="1" y="1" width="44" height="36" rx="1" fill="#c7c7c7" stroke="#eee" />
    <rect x="4" y="4" width="38" height="30" fill="url(#tg)" stroke="#111" />
    <path d="M9 10l6 5-6 4M17 21h8" stroke="#fff" strokeWidth="2.500" fill="none" />
  </svg>
);
const AtomIcon = () => (
  <svg viewBox="0 0 42 42" className="size-[42px]" fill="none" aria-hidden="true">
    <defs><linearGradient id="ag" x2="0" y2="1"><stop stopColor="#a9e08c" /><stop offset="1" stopColor="#12a077" /></linearGradient></defs>
    <circle cx="21" cy="21" r="20" fill="url(#ag)" stroke="#f1f5f1" strokeWidth="1.500" />
    {[8, 64, -56].map((a) => <ellipse key={a} cx="21" cy="21" rx="13" ry="5" transform={`rotate(${a} 21 21)`} stroke="#effff5" strokeWidth="1.100" />)}
    <circle cx="21" cy="21" r="1.800" fill="#fff" />
  </svg>
);
const QgisIcon = ({ className }) => (
  <svg viewBox="0 0 46 46" className={className} aria-hidden="true">
    <defs><linearGradient id="qg" x2="0" y2="1"><stop stopColor="#97b51f" /><stop offset="1" stopColor="#579437" /></linearGradient></defs>
    <path fillRule="evenodd" d="M23 1a23 21.500 0 1 0 10 41l-8-8A13.500 13.500 0 1 1 36 25l7 7A23 21.500 0 0 0 23 1z" fill="url(#qg)" />
    <path d="M25 32l7-7 14 13v7h-8z" fill="#4b9139" />
    <path d="M32 25l14 13v3L29 29z" fill="#7bb85a" />
    <path d="M19 19h8l5 5-6 8-7-6z" fill="#ee7913" />
    <path d="M27 27l5-3v4l-6 6v-3z" fill="#f5e55c" />
  </svg>
);
const BellIcon = () => (
  <svg viewBox="0 0 38 42" className="h-[42px] w-[38px]" aria-hidden="true">
    <defs><linearGradient id="bg"><stop stopColor="#ffb300" /><stop offset=".35" stopColor="#fff27a" /><stop offset="1" stopColor="#ff9d00" /></linearGradient></defs>
    <path d="M12 9Q5 12 6 24l-1 6q-8 6 1 8 13 4 27 0 8-3 0-8l-1-7Q33 12 26 9z" fill="url(#bg)" stroke="#3d1e00" strokeWidth="2" />
    <ellipse cx="19" cy="6" rx="7" ry="5" fill="#c08210" stroke="#3d1e00" strokeWidth="1.500" />
    <path d="M5 34q14 7 28 0" stroke="#ff8c00" strokeWidth="3" fill="none" />
    <text x="19" y="29" textAnchor="middle" className="fill-[#7a3200] text-[9px] font-bold italic">asc</text>
  </svg>
);
const KazamIcon = () => (
  <svg viewBox="0 0 44 38" className="h-[38px] w-11" aria-hidden="true">
    <defs><linearGradient id="kg" x2="0" y2="1"><stop stopColor="#e572dc" /><stop offset="1" stopColor="#743078" /></linearGradient></defs>
    <rect width="44" height="38" rx="1" fill="#b8b8b8" />
    <rect y="7" width="44" height="24" fill="url(#kg)" />
    <path d="M3 4h38M3 35h38" stroke="#333" strokeWidth="3" strokeDasharray="3 2" />
    <path d="M34 11h9M34 15h9M34 19h9M34 23h9M34 27h9" stroke="#6d1674" strokeWidth="1" strokeDasharray="3 2" />
    <circle cx="13" cy="19" r="9" fill="#e2e2e2" stroke="#777" />
    <circle cx="13" cy="20" r="5" fill="#fff" stroke="#999" />
    <ellipse cx="13" cy="20" rx="4" ry="3" fill="#3b129b" />
  </svg>
);

const launchers = [
  ["Chrome", <ChromeIcon />, 1],
  ["Files", <FilesIcon />, 1],
  ["Terminal", <TerminalIcon />, 0],
  ["Atom", <AtomIcon />, 1],
  ["QGIS", <QgisIcon className="size-[46px]" />, 2],
  ["Alarm", <BellIcon />, 0],
  ["Kazam", <KazamIcon />, 1],
];

function Dock() {
  return (
    <nav aria-label="Launcher" className="flex w-[67px] shrink-0 flex-col bg-linear-to-b from-[#52363a] to-[#413035]">
      {launchers.map(([name, icon, runs]) => (
        <button
          key={name}
          type="button"
          aria-label={name}
          className={"relative my-px mr-[3px] ml-0.5 flex h-[62px] items-center justify-center rounded " + (name === "QGIS" ? "bg-[#6c565b]" : "")}
        >
          {runs > 0 && (
            <span className="absolute left-0 flex flex-col gap-[3px]">
              {Array.from({ length: runs }, (_, i) => <span key={i} className="size-[5px] rounded-full bg-[#ec5424]" />)}
            </span>
          )}
          {icon}
        </button>
      ))}
      <button type="button" aria-label="Show Applications" className="mt-auto flex h-16 items-center justify-center pr-px">
        <svg width="32" height="32" fill="#f0efef" aria-hidden="true">
          {[4, 16, 28].map((y) => [4, 16, 28].map((x) => <circle key={x + "-" + y} cx={x} cy={y} r="3" />))}
        </svg>
      </button>
    </nav>
  );
}

/* ---------- window pieces ---------- */

const menus = [["Layout", 1], ["Edit", 1], ["View", 1], ["Items", 1], ["Add Item", 1], ["Atlas", 0], ["Settings", 0]];
const sideTools = [["hand", "Pan"], ["zoomSel", "Zoom"], ["select", "Select item"], ["moveContent", "Move content"], ["editNodes", "Edit nodes"], ["addMap", "Add map"], ["add3d", "Add 3D map"], ["addPicture", "Add picture"], ["addLabel", "Add label"], ["addLegend", "Add legend"], ["addScale", "Add scale bar"], ["addShape", "Add shape"], ["addArrow", "Add arrow"], ["addNode", "Add node item"], ["addHtml", "Add HTML"], ["addTable", "Add attribute table"]];
const history = ["Create Label", "Create Map", "Move Items", "Move Items", "Move Items", "Create Label", "Move Items"];

function TopBar() {
  return (
    <header className="grid h-[27px] shrink-0 grid-cols-3 items-center bg-linear-to-b from-[#5a564c] to-[#403f3a] text-sm font-bold text-[#dfdbd2]">
      <div className="flex items-center pl-3">
        <button type="button">Activities</button>
        <button type="button" className="ml-6 flex items-center gap-[6px]">
          <QgisIcon className="size-4" />
          QGIS Desktop
          <svg width="10" height="5" fill="#dfdbd2" aria-hidden="true"><path d="M0 0h10L5 5z" /></svg>
        </button>
      </div>
      <time className="whitespace-pre pl-[68px] text-center">Sun Jan  6,  6:39:44 PM</time>
      <div className="flex items-center justify-end pr-[15px]">
        <svg width="21" height="15" fill="#c0bdb6" aria-hidden="true" className="mr-[29px]">
          <path fillRule="evenodd" d="M1 2q0-1 1-1h11q1 0 1 1v11q0 1-1 1H2q-1 0-1-1zM4 5v5h6V5z" /><path d="M14 6l6-4v11l-6-4z" />
        </svg>
        <svg width="16" height="14" fill="none" stroke="#dfdbd2" strokeWidth="2" aria-hidden="true" className="mr-3">
          <path d="M1 4q7-5 14 0M3 7q5-4 10 0M5 10q3-2 6 0" /><circle cx="8" cy="12" r="1" />
        </svg>
        <svg width="17" height="14" fill="none" stroke="#dfdbd2" strokeWidth="1.500" aria-hidden="true" className="mr-[13px]">
          <path d="M1 5h3l4-4v12L4 9H1z" fill="#dfdbd2" /><path d="M10 5q2 2 0 4M12 3q4 4 0 8M14 1q5 6 0 12" />
        </svg>
        <svg width="12" height="16" fill="none" stroke="#aaa79f" strokeWidth="2" aria-hidden="true" className="mr-[6px]">
          <path d="M1 3h2V1h6v2h2v12H1z" /><path d="M7 4L3 9h3l-1 4 4-5H6z" fill="#eee" stroke="none" />
        </svg>
        <span className="text-xs">100 %</span>
        <svg width="10" height="5" fill="#dfdbd2" aria-hidden="true" className="ml-[5px]"><path d="M0 0h10L5 5z" /></svg>
      </div>
    </header>
  );
}

function TitleBar() {
  const btn = "flex size-4 items-center justify-center rounded-full ";
  return (
    <div className="flex h-7 shrink-0 items-center bg-linear-to-b from-[#3b3934] to-[#4b4943] pr-[5px] pl-[61px]">
      <h1 className="flex-1 text-center text-sm font-bold text-[#dfdbd2]">*MithiRiver</h1>
      <div className="flex gap-1">
        <button type="button" aria-label="Minimize" className={btn + "bg-[#85837b]"}><span className="h-px w-2 bg-[#3b3934]" /></button>
        <button type="button" aria-label="Maximize" className={btn + "bg-[#85837b]"}><span className="h-[6px] w-2 border border-[#3b3934]" /></button>
        <button type="button" aria-label="Close" className={btn + "bg-[#ee6338]"}>
          <svg width="6" height="6" stroke="#5c2513" aria-hidden="true"><path d="M0 0l6 6M6 0L0 6" /></svg>
        </button>
      </div>
    </div>
  );
}

const barCls = "flex shrink-0 items-stretch border-b border-[#b5b5b5] bg-linear-to-b from-[#fafafa] to-[#eee] ";

function Canvas() {
  const h = "absolute size-[10px] border border-[#308cc6] bg-white ";
  return (
    <main className="flex min-w-0 flex-1 flex-col border-b border-l border-[#b5b5b5]">
      <HRuler />
      <div className="flex min-h-0 flex-1">
        <VRuler />
        <div className="relative flex-1 overflow-hidden bg-[#d7d7d7]">
          <div className="absolute left-[158px] top-[94px] h-[372px] w-[526px] bg-white shadow-[8px_8px_0_#969696]">
            <MapView />
            <div className="absolute left-[61px] top-[336px] h-[28px] w-[387px] bg-white">
              <p className="text-[6px] leading-[8px] text-black">Lorem ipsum</p>
              <span className={h + "left-0 top-0"} />
              <span className={h + "left-0 top-[9px]"} />
              <span className={h + "bottom-0 left-0"} />
              <span className={h + "left-[188px] top-0"} />
              <span className={h + "bottom-0 left-[188px]"} />
              <span className={h + "right-0 top-0"} />
              <span className={h + "right-0 top-[9px]"} />
              <span className={h + "bottom-0 right-0"} />
              <span className="absolute inset-0 border border-[#4da0d4]" />
              <span className="absolute inset-0 border border-dashed border-[#5b0028]" />
            </div>
          </div>
        </div>
      </div>
    </main>
  );
}

function Group({ title, children }) {
  return (
    <section className="mb-[7px]">
      <h3 className="flex h-5 items-center gap-[9px] text-sm font-bold text-[#444]">
        <svg width="12" height="8" fill="#333" aria-hidden="true"><path d="M0 0h12L6 8z" /></svg>
        {title}
      </h3>
      <div className="mt-px flex w-[430px] flex-col rounded-[2px] border border-[#d0d0d0] bg-[#ebebeb] p-3 pr-[11px]">{children}</div>
    </section>
  );
}

function SidePanels() {
  return (
    <aside className="flex w-[390px] shrink-0 flex-col">
      <div role="tablist" className="flex h-[29px] shrink-0 items-end border-b border-[#b5b5b5]">
        <Tab>Items</Tab>
        <Tab active>Undo History</Tab>
      </div>
      <DockHeader>Undo History</DockHeader>
      <div className="flex h-[134px] shrink-0 border border-[#b5b5b5] bg-white">
        <ul className="flex-1 text-sm leading-[17px]">
          {history.map((t, i) => (
            <li key={i} className={"pl-[3px] " + (i === 6 ? "bg-[#308cc6] text-white" : "")}>{t}</li>
          ))}
        </ul>
        <div className="flex w-[14px] flex-col border-l border-[#b5b5b5] bg-white">
          <ArrowBtn d="up" className="h-[13px] border-b border-[#b5b5b5]" />
          <span className="h-[14px] border-b border-[#b5b5b5] bg-[#e4e4e4]" />
          <ArrowBtn d="down" className="mt-auto h-[14px] border-t border-[#b5b5b5]" />
        </div>
      </div>
      <div className="flex h-[6px] shrink-0 items-center justify-center">
        <span className="w-4 border-t border-dotted border-[#aaa]" />
      </div>
      <div role="tablist" className="flex h-[28px] shrink-0 items-end border-b border-[#b5b5b5]">
        <Tab>Layout</Tab>
        <Tab active>Item Properties</Tab>
        <Tab>Guides</Tab>
        <Tab>Atlas</Tab>
      </div>
      <DockHeader>Item Properties</DockHeader>
      <p className="h-[21px] shrink-0 bg-[#c8c8c8] pl-[6px] text-sm leading-[21px] font-bold">Label</p>
      <div className="flex min-h-0 flex-1 flex-col border border-[#b5b5b5]">
        <div className="flex min-h-0 flex-1">
          <div className="min-w-0 flex-1 overflow-hidden pt-[11px] pl-3 text-sm">
            <Group title="Main Properties">
              <textarea aria-label="Label text" defaultValue="Lorem ipsum" className="h-[70px] resize-none border border-[#b5b5b5] bg-white px-1 py-[3px]" />
              <label className="my-2 flex h-[19px] items-center gap-[5px]">
                <input type="checkbox" className="size-[14px] appearance-none border border-[#b5b5b5] bg-white" />
                Render as HTML
              </label>
              <button type="button" className="h-[25px] rounded-[3px] border border-[#ababab] bg-linear-to-b from-[#fcfcfc] to-[#eee]">
                Insert an Expression...
              </button>
            </Group>
            <Group title="Appearance">
              <button type="button" className="h-[23px] rounded-[3px] border border-[#ababab] bg-linear-to-b from-[#fcfcfc] to-[#eee] pl-[6px] text-left text-[13px]">
                Font
              </button>
              <div className="mt-[6px] flex h-7 items-center">
                <span className="w-[284px]">Font color</span>
                <button type="button" aria-label="Font color" className="flex h-7 flex-1 items-center rounded-[3px] border border-[#ababab] bg-[#fafafa] px-1">
                  <span className="h-4 w-full rounded-[3px] bg-black" />
                </button>
              </div>
              <div className="mt-[7px] flex h-[26px] items-center">
                <label htmlFor="hm" className="w-[284px]">Horizontal margin</label>
                <input id="hm" defaultValue="0.00 mm" className="h-[26px] w-[120px] rounded-[3px] border border-[#ababab] bg-white pl-1" />
              </div>
            </Group>
          </div>
          <div className="flex w-[14px] shrink-0 flex-col border-l border-[#b5b5b5] bg-[#e4e4e4]">
            <ArrowBtn d="up" className="h-[14px] border-b border-[#b5b5b5]" />
            <span className="h-24 border-b border-[#b5b5b5] bg-[#fbfbfb]" />
            <ArrowBtn d="down" className="mt-auto h-[14px] border-t border-[#b5b5b5]" />
          </div>
        </div>
        <div className="flex h-[14px] shrink-0 border-t border-[#b5b5b5] bg-[#e4e4e4]">
          <ArrowBtn d="left" className="w-[14px] border-r border-[#b5b5b5]" />
          <span className="w-[286px] border-r border-[#b5b5b5] bg-[#fbfbfb]" />
          <ArrowBtn d="right" className="mr-[14px] ml-auto w-[14px] border-x border-[#b5b5b5]" />
        </div>
      </div>
    </aside>
  );
}

function StatusBar() {
  return (
    <footer className="flex h-[30px] shrink-0 items-center pt-px text-sm">
      <span className="flex-1 pl-[6px]">1 item selected</span>
      <span className="w-[106px]">x: 175.22 mm</span>
      <span className="w-[106px]">y: 195.003 mm</span>
      <span className="w-[106px]">page: 1</span>
      <span className="relative flex h-[25px] w-[141px]">
        <select aria-label="Zoom" className="w-full appearance-none rounded-[3px] border border-[#ababab] bg-white pl-[3px]">
          <option>46.8%</option>
        </select>
        <span className="pointer-events-none absolute inset-y-px right-px flex w-5 items-center justify-center border-l border-[#b5b5b5] bg-[#fafafa]"><Tri /></span>
      </span>
      <input
        type="range"
        aria-label="Zoom level"
        defaultValue="3"
        className="mr-[2px] ml-[7px] h-4 w-[98px] appearance-none bg-transparent [&::-webkit-slider-runnable-track]:h-[5px] [&::-webkit-slider-runnable-track]:rounded-full [&::-webkit-slider-runnable-track]:border [&::-webkit-slider-runnable-track]:border-[#aaa] [&::-webkit-slider-runnable-track]:bg-linear-to-r [&::-webkit-slider-runnable-track]:from-[#308cc6] [&::-webkit-slider-runnable-track]:from-5% [&::-webkit-slider-runnable-track]:to-[#ccc] [&::-webkit-slider-runnable-track]:to-5% [&::-webkit-slider-thumb]:-mt-[5px] [&::-webkit-slider-thumb]:size-[13px] [&::-webkit-slider-thumb]:appearance-none [&::-webkit-slider-thumb]:rounded-[3px] [&::-webkit-slider-thumb]:border [&::-webkit-slider-thumb]:border-[#999] [&::-webkit-slider-thumb]:bg-white"
      />
    </footer>
  );
}

export default function App() {
  return (
    <div className="flex h-screen flex-col overflow-hidden bg-[#efefef] font-['Noto_Sans','Open_Sans',sans-serif] text-black">
      <TopBar />
      <div className="flex min-h-0 flex-1">
        <Dock />
        <div className="flex min-w-0 flex-1 flex-col">
          <TitleBar />
          <nav aria-label="Menu" className="flex h-[22px] shrink-0 items-center gap-4 border-b border-[#d0d0d0] pl-[10px] text-sm">
            {menus.map(([m, u]) => (
              <button key={m} type="button">
                {u ? <span className="underline decoration-1 underline-offset-2">{m[0]}</span> : m[0]}
                {m.slice(1)}
              </button>
            ))}
          </nav>
          <div className={barCls + "h-[39px]"}>
            <Grip />
            <Tool n="save" label="Save" />
            <Sep />
            <Tool n="newLayout" label="New layout" />
            <Tool n="duplicate" label="Duplicate layout" />
            <Tool n="manager" label="Layout manager" />
            <Tool n="folder" label="Add items from template" />
            <Tool n="saveTemplate" label="Save as template" />
            <Sep />
            <Tool n="newPage" label="Add pages" />
            <Sep />
            <Tool n="printer" label="Print" />
            <Tool n="exportImage" label="Export as image" />
            <Tool n="exportSvg" label="Export as SVG" />
            <Tool n="exportPdf" label="Export as PDF" />
            <Tool n="undo" label="Undo" />
            <Tool n="redo" label="Redo" disabled />
            <Grip className="w-4 pl-1" />
            <Tool n="atlas" label="Preview atlas" disabled />
            <Tool n="first" label="First feature" disabled />
            <Tool n="prev" label="Previous feature" disabled />
            <span className="relative flex h-[30px] w-[84px] shrink-0 self-center">
              <select aria-label="Atlas page" disabled className="w-full appearance-none rounded-[3px] border border-[#ababab] bg-[#efefef] pl-1 text-sm text-[#bbb] opacity-100">
                <option>1</option>
              </select>
              <span className="pointer-events-none absolute inset-y-px right-px flex w-5 items-center justify-center border-l border-[#b5b5b5] bg-[#f8f8f8]"><Tri c="#c4c4c4" /></span>
            </span>
            <Tool n="next" label="Next feature" disabled />
            <Tool n="last" label="Last feature" disabled />
            <Tool n="printerOff" label="Print atlas" disabled />
            <Tool n="exportAtlas" label="Export atlas" />
            <Tool n="atlasSettings" label="Atlas settings" />
          </div>
          <div className={barCls + "h-[38px]"}>
            <Grip className="w-3" />
            <Tool n="zoomIn" label="Zoom in" />
            <Tool n="zoomOut" label="Zoom out" />
            <Tool n="zoomOne" label="Zoom to 100%" />
            <Tool n="zoomFull" label="Zoom full" />
            <Tool n="refresh" label="Refresh" />
            <Grip className="w-[17px] pl-1" />
            <Tool n="lock" label="Lock items" />
            <Tool n="unlock" label="Unlock items" />
            <Tool n="group" label="Group" />
            <Tool n="ungroup" label="Ungroup" />
            <Tool n="raise" label="Raise" />
            <Tool n="align" label="Align" />
            <Tool n="distribute" label="Distribute" />
            <Tool n="resize" label="Resize" />
          </div>
          <div className="flex min-h-0 flex-1">
            <div role="toolbar" aria-label="Toolbox" className="flex w-[39px] shrink-0 flex-col items-center bg-linear-to-r from-[#fafafa] to-[#eee]">
              <svg width="18" height="13" aria-hidden="true" className="shrink-0">
                {[0, 3, 6, 9, 12, 15].map((x) => [6, 9].map((y) => <rect key={x + "-" + y} x={x + 1} y={y} width="1" height="1" fill="#aaa" />))}
              </svg>
              {sideTools.map(([n, label]) => (
                <button
                  key={n}
                  type="button"
                  aria-label={label}
                  className={"flex size-8 shrink-0 items-center justify-center rounded-[3px] border " + (n === "select" ? "border-[#ababab] bg-[#dadada]" : "border-transparent")}
                >
                  <Ico>{I[n]}</Ico>
                </button>
              ))}
            </div>
            <Canvas />
            <div className="flex w-[6px] shrink-0 items-center justify-center">
              <span className="h-4 border-l border-dotted border-[#aaa]" />
            </div>
            <SidePanels />
          </div>
          <StatusBar />
        </div>
      </div>
    </div>
  );
}
